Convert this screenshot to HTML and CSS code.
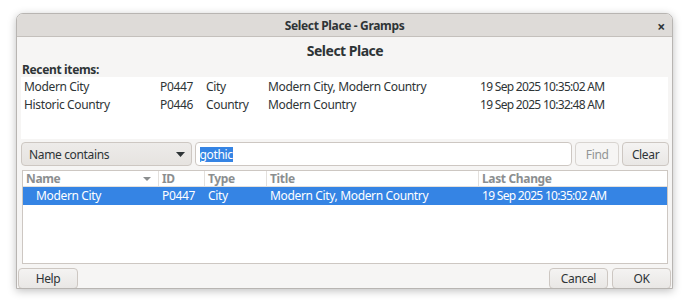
FILE: index.html
```html
<!DOCTYPE html>
<html>
<head>
<meta charset="utf-8">
<link rel="stylesheet" href="styles.css">
</head>
<body>
<div class="window">
  <div class="titlebar">
    <span class="title">Select Place - Gramps</span>
    <span class="close">×</span>
  </div>
  <div class="content">
    <div class="heading">Select Place</div>
    <div class="recent-label">Recent items:</div>
    <div class="recent">
      <div class="rrow"><span class="c-name">Modern City</span><span class="c-id">P0447</span><span class="c-type">City</span><span class="c-title">Modern City, Modern Country</span><span class="c-date">19 Sep 2025 10:35:02 AM</span></div>
      <div class="rrow"><span class="c-name">Historic Country</span><span class="c-id">P0446</span><span class="c-type">Country</span><span class="c-title">Modern Country</span><span class="c-date">19 Sep 2025 10:32:48 AM</span></div>
    </div>
    <div class="search">
      <div class="combo"><span>Name contains</span><svg width="9" height="5" viewBox="0 0 9 5"><path d="M0 0h9L4.5 5z" fill="#2e3436"/></svg></div>
      <div class="entry"><span class="sel">gothic</span></div>
      <div class="btn disabled find">Find</div>
      <div class="btn clear">Clear</div>
    </div>
    <div class="tree">
      <div class="thead">
        <div class="h h-name"><span>Name</span><svg width="8" height="4" viewBox="0 0 8 4"><path d="M0 0h8L4 4z" fill="#8b8e8f"/></svg></div>
        <div class="h h-id">ID</div>
        <div class="h h-type">Type</div>
        <div class="h h-title">Title</div>
        <div class="h h-date">Last Change</div>
      </div>
      <div class="trow selected">
        <span class="t-name">Modern City</span><span class="t-id">P0447</span><span class="t-type">City</span><span class="t-title">Modern City, Modern Country</span><span class="t-date">19 Sep 2025 10:35:02 AM</span>
      </div>
    </div>
    <div class="footer">
      <div class="btn help">Help</div>
      <div class="spacer"></div>
      <div class="btn cancel">Cancel</div>
      <div class="btn ok">OK</div>
    </div>
  </div>
</div>
</body>
</html>
```
FILE: styles.css
```css
* { box-sizing: border-box; }
html, body { margin: 0; padding: 0; background: #ffffff; }
body {
  width: 690px; height: 306px;
  font-family: "Noto Sans", "DejaVu Sans", sans-serif;
  font-size: 12px;
  letter-spacing: -0.35px;
  color: #2e3436;
  padding: 13px 0 0 16px;
}
.window {
  width: 657px; height: 276px;
  border: 1px solid #b8b5b2;
  border-radius: 7px 7px 0 0;
  background: #f6f5f4;
  box-shadow: 0 2px 9px rgba(0,0,0,0.25);
  display: flex; flex-direction: column;
  overflow: hidden;
}
.titlebar {
  height: 23px; flex: none;
  background: #dedbd8;
  border-bottom: 1px solid #c4c0bc;
  display: flex; align-items: center; justify-content: center;
  position: relative;
}
.title { font-weight: bold; font-size: 12px; color: #2e3436; }
.close {
  position: absolute; right: 7px; top: 3px;
  font-weight: bold; font-size: 14px; color: #2e3436;
}
.content {
  flex: 1;
  display: flex; flex-direction: column;
  padding: 0 3px 1px 4px;
}
.heading {
  text-align: center; font-weight: bold; font-size: 14px; letter-spacing: -0.5px;
  height: 24px; line-height: 28px;
}
.recent-label { font-weight: bold; font-size: 12px; height: 16px; line-height: 17px; padding-left: 1px; }
.recent {
  background: #ffffff; height: 62px;
  margin-right: 1px;
  padding-top: 1px;
}
.rrow { display: flex; height: 18px; line-height: 18px; }
.c-name { width: 139px; padding-left: 3px; }
.c-id { width: 46px; }
.c-type { width: 62px; }
.c-title { width: 212px; }
.c-date, .t-date { letter-spacing: -0.7px; }
.search {
  display: flex; height: 24px; margin-top: 3px; gap: 3px;
}
.combo {
  width: 171px; border: 1px solid #cdc7c2; border-radius: 4px;
  background: linear-gradient(#edebe9, #e6e3e0);
  display: flex; align-items: center; justify-content: space-between;
  padding: 0 6px 0 7px;
}
.entry {
  width: 379px; border: 1px solid #cdc7c2; border-radius: 4px;
  background: #ffffff;
  display: flex; align-items: center; padding-left: 4px;
}
.sel { background: #3584e4; color: #ffffff; line-height: 15px; }
.btn {
  border: 1px solid #cdc7c2; border-radius: 4px;
  background: linear-gradient(#f4f3f2, #e9e7e5);
  display: flex; align-items: center; justify-content: center;
}
.find { width: 44px; color: #929595; background: #f6f5f4; border-color: #d8d4d0; }
.clear { width: 47px; }
.tree {
  margin-top: 4px; height: 94px;
  background: #ffffff; border: 1px solid #cdc7c2;
  margin-left: 1px; margin-right: 1px;
}
.thead { display: flex; height: 16px; border-bottom: 1px solid #e3e0dd; }
.h {
  color: #8b8e8f; font-weight: bold; font-size: 12px; line-height: 15px;
  border-right: 1px solid #e3e0dd; padding-left: 3px;
}
.h-name { width: 136px; display: flex; align-items: center; justify-content: space-between; padding-right: 7px; }
.h-id { width: 46px; }
.h-type { width: 62px; }
.h-title { width: 212px; }
.h-date { flex: 1; border-right: none; }
.trow { display: flex; height: 18px; line-height: 18px; }
.selected { background: #3584e4; color: #ffffff; }
.t-name { width: 136px; padding-left: 13px; }
.t-id { width: 46px; padding-left: 3px; }
.t-type { width: 62px; padding-left: 3px; }
.t-title { width: 212px; padding-left: 3px; }
.t-date { padding-left: 3px; }
.footer { display: flex; gap: 4px; margin-top: 4px; height: 21px; margin-left: -3px; }
.spacer { flex: 1; }
.help { width: 60px; }
.cancel { width: 59px; }
.ok { width: 59px; margin-right: -2px; }
```
